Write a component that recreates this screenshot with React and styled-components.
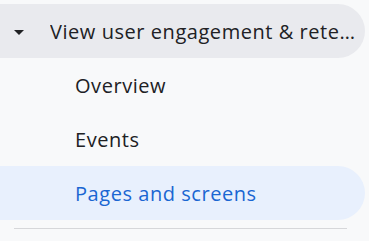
import React from 'react'
import styled, { createGlobalStyle } from 'styled-components'

const GlobalStyle = createGlobalStyle`
  body {
    margin: 0;
    background: #f8f9fa;
    font-family: "Open Sans", Roboto, sans-serif;
  }
`

const items = [
  { label: 'Overview' },
  { label: 'Events' },
  { label: 'Pages and screens', active: true },
]

const App = () => {
  return (
    <>
      <GlobalStyle />
      <Nav>
        <Header>
          <Caret>
            <svg width="10" height="5" viewBox="0 0 10 5">
              <path d="M0 0h10L5 5z" fill="#202124" />
            </svg>
          </Caret>
          <HeaderLabel>View user engagement &amp; retention</HeaderLabel>
        </Header>
        {items.map((item) => (
          <Item key={item.label} $active={item.active}>
            {item.label}
          </Item>
        ))}
        <Divider />
      </Nav>
    </>
  )
}

const Nav = styled.nav`
  width: 369px;
  height: 241px;
  padding-top: 4px;
  box-sizing: border-box;
  display: flex;
  flex-direction: column;
`
const Header = styled.div`
  height: 54px;
  margin-right: 4px;
  display: flex;
  align-items: center;
  background: #e9eaee;
  border-radius: 0 27px 27px 0;
  padding-right: 6px;
`
const Caret = styled.span`
  width: 50px;
  flex-shrink: 0;
  display: flex;
  justify-content: center;
  padding-right: 13px;
  box-sizing: border-box;
  padding-top: 2px;
`
const HeaderLabel = styled.span`
  font-size: 20px;
  font-weight: 500;
  letter-spacing: 0.55px;
  color: #202124;
  white-space: nowrap;
  overflow: hidden;
  text-overflow: ellipsis;
`
const Item = styled.div`
  height: 54px;
  margin-right: 4px;
  display: flex;
  align-items: center;
  padding-left: 75px;
  font-size: 20px;
  font-weight: 500;
  letter-spacing: 0.55px;
  color: ${(p) => (p.$active ? '#1a66d2' : '#202124')};
  background: ${(p) => (p.$active ? '#e8f0fd' : 'transparent')};
  border-radius: 0 27px 27px 0;
`
const Divider = styled.hr`
  margin: 8px 22px 0 14px;
  border: 0;
  border-top: 1px solid #d6d7da;
`

export default App
